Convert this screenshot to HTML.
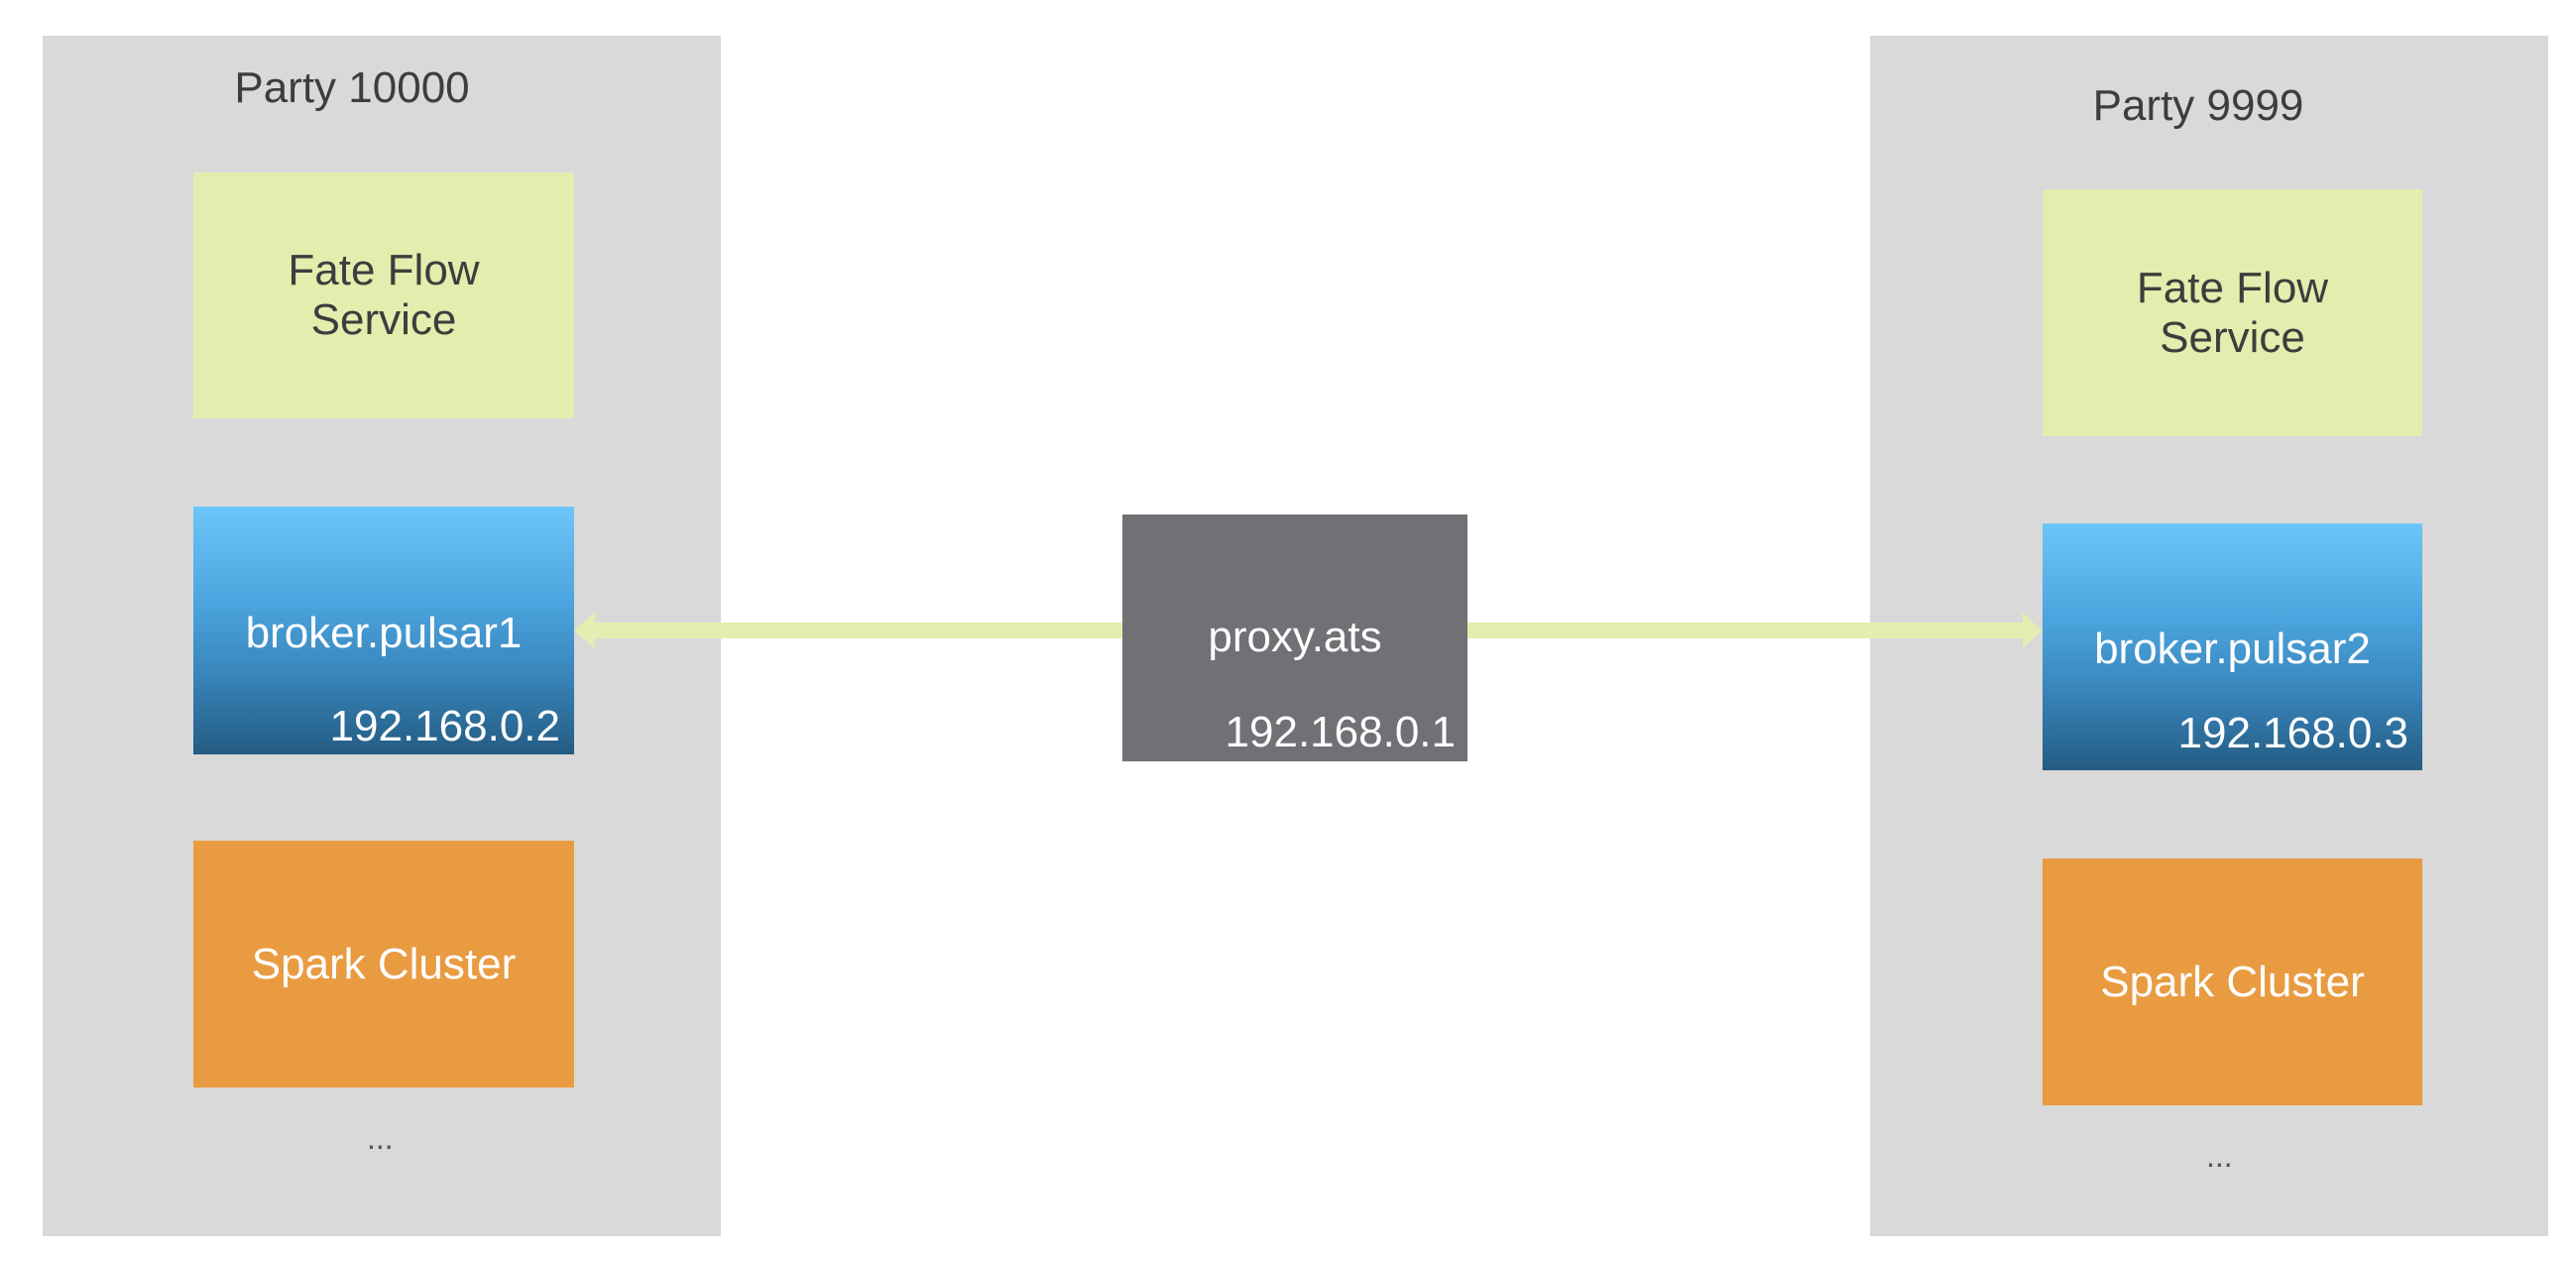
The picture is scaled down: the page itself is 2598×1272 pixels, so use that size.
<!DOCTYPE html>
<html><head><meta charset="utf-8"><style>
html,body{margin:0;padding:0;background:#fff;}
body{width:2598px;height:1272px;position:relative;overflow:hidden;font-family:"Liberation Sans","DejaVu Sans",sans-serif;}
.a{position:absolute;}
.panel{background:#d9d9d9;}
.fate{background:#e2eeae;color:#3d3d3d;display:flex;align-items:center;justify-content:center;text-align:center;font-size:44px;line-height:50px;}
.broker{background:linear-gradient(#6cc6f9,#4aa3dc 40%,#3b88bf 65%,#235c83);color:#fff;}
.spark{background:#e99b41;color:#fff;display:flex;align-items:center;justify-content:center;font-size:44px;}
.t{position:absolute;white-space:nowrap;font-size:44px;}
</style></head><body>
<div class="a panel" style="left:43px;top:36px;width:684px;height:1211px;"></div>
<div class="a panel" style="left:1886px;top:36px;width:684px;height:1211px;"></div>

<div class="t" style="left:0;width:710px;text-align:center;top:64px;color:#3d3d3d;">Party 10000</div>
<div class="t" style="left:1886px;width:662px;text-align:center;top:82px;color:#3d3d3d;">Party 9999</div>

<div class="a fate" style="left:195px;top:174px;width:384px;height:248px;">Fate Flow<br>Service</div>
<div class="a fate" style="left:2060px;top:191px;width:383px;height:249px;">Fate Flow<br>Service</div>

<div class="a broker" style="left:195px;top:511px;width:384px;height:250px;">
  <div class="t" style="left:0;width:384px;text-align:center;top:103px;">broker.pulsar1</div>
  <div class="t" style="right:14px;top:197px;">192.168.0.2</div>
</div>
<div class="a broker" style="left:2060px;top:528px;width:383px;height:249px;">
  <div class="t" style="left:0;width:383px;text-align:center;top:102px;">broker.pulsar2</div>
  <div class="t" style="right:14px;top:187px;">192.168.0.3</div>
</div>

<div class="a spark" style="left:195px;top:848px;width:384px;height:249px;">Spark Cluster</div>
<div class="a spark" style="left:2060px;top:866px;width:383px;height:249px;">Spark Cluster</div>

<div class="t" style="left:370px;top:1130px;color:#555;font-size:32px;">...</div>
<div class="t" style="left:2225px;top:1148px;color:#555;font-size:32px;">...</div>

<svg class="a" style="left:0;top:0" width="2598" height="1272">
  <rect x="598" y="628" width="540" height="16" fill="#e2efb0"/>
  <polygon points="579,636 600,618 600,654" fill="#e2efb0"/>
  <rect x="1470" y="628" width="572" height="16" fill="#e2efb0"/>
  <polygon points="2059,636 2040,618 2040,654" fill="#e2efb0"/>
</svg>

<div class="a" style="left:1132px;top:519px;width:348px;height:249px;background:#717075;color:#fff;">
  <div class="t" style="left:0;width:348px;text-align:center;top:99px;">proxy.ats</div>
  <div class="t" style="right:12px;top:195px;">192.168.0.1</div>
</div>
</body></html>
